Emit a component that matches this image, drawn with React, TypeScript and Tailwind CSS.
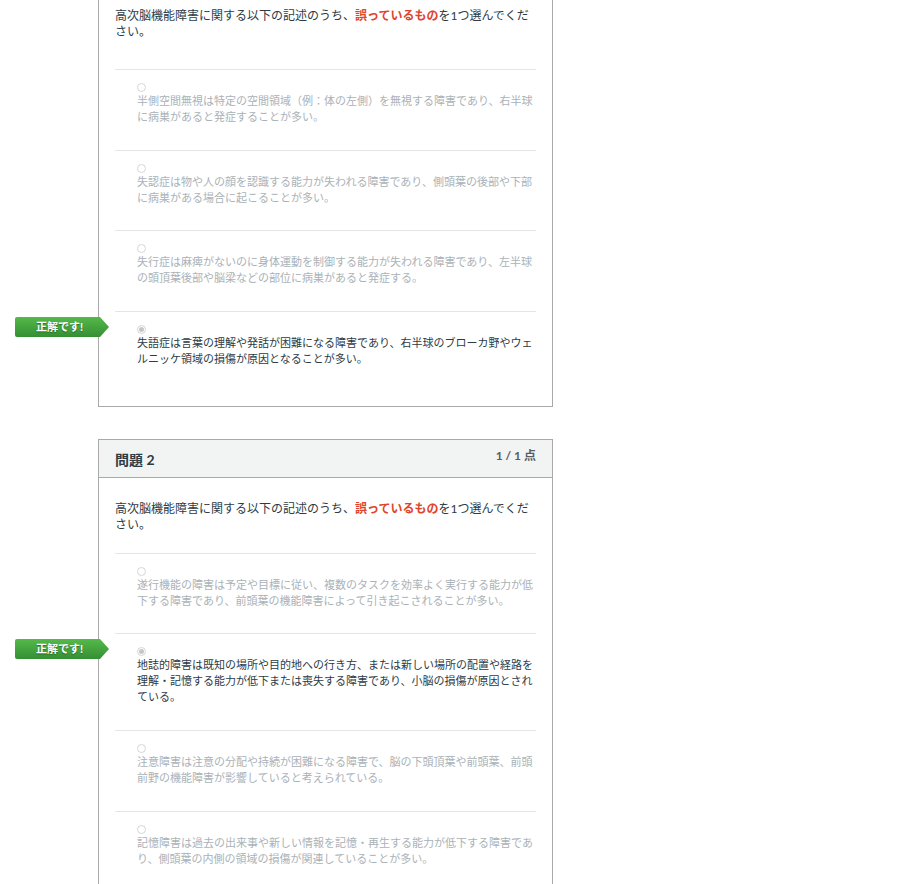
type Option = { text: string; selected?: boolean }

const q1Options: Option[] = [
  { text: '半側空間無視は特定の空間領域（例：体の左側）を無視する障害であり、右半球に病巣があると発症することが多い。' },
  { text: '失認症は物や人の顔を認識する能力が失われる障害であり、側頭葉の後部や下部に病巣がある場合に起こることが多い。' },
  { text: '失行症は麻痺がないのに身体運動を制御する能力が失われる障害であり、左半球の頭頂葉後部や脳梁などの部位に病巣があると発症する。' },
  { text: '失語症は言葉の理解や発話が困難になる障害であり、右半球のブローカ野やウェルニッケ領域の損傷が原因となることが多い。', selected: true },
]

const q2Options: Option[] = [
  { text: '遂行機能の障害は予定や目標に従い、複数のタスクを効率よく実行する能力が低下する障害であり、前頭葉の機能障害によって引き起こされることが多い。' },
  { text: '地誌的障害は既知の場所や目的地への行き方、または新しい場所の配置や経路を理解・記憶する能力が低下または喪失する障害であり、小脳の損傷が原因とされている。', selected: true },
  { text: '注意障害は注意の分配や持続が困難になる障害で、脳の下頭頂葉や前頭葉、前頭前野の機能障害が影響していると考えられている。' },
  { text: '記憶障害は過去の出来事や新しい情報を記憶・再生する能力が低下する障害であり、側頭葉の内側の領域の損傷が関連していることが多い。' },
]

const CorrectBanner = () => (
  <div className="absolute left-[-100px] top-[5px] flex h-[20px] w-[94px] items-center">
    <div className="flex h-full w-[85px] items-center justify-center rounded-l-[2px] bg-gradient-to-b from-[#55b94a] to-[#348f34] pl-[4px] text-[11px] font-bold text-white [text-shadow:0_1px_1px_rgba(0,0,0,0.35)]">
      正解です!
    </div>
    <svg width="9" height="20" viewBox="0 0 9 20" className="block">
      <defs>
        <linearGradient id="bn" x1="0" y1="0" x2="0" y2="1">
          <stop offset="0" stopColor="#55b94a" />
          <stop offset="1" stopColor="#348f34" />
        </linearGradient>
      </defs>
      <polygon points="0,0 9,10 0,20" fill="url(#bn)" />
    </svg>
  </div>
)

const Radio = ({ checked }: { checked?: boolean }) => (
  <span className="flex h-[9px] w-[9px] items-center justify-center rounded-full border border-[#d3d6d8] bg-white">
    {checked && <span className="h-[5px] w-[5px] rounded-full bg-[#c4c7c9]" />}
  </span>
)

const AnswerRow = ({ option }: { option: Option }) => (
  <div className="relative border-t border-[#e3e6e8] pb-[24.7px] pl-[22px] pt-[13px]">
    {option.selected && <CorrectBanner />}
    <div className="flex h-[10px] items-start">
      <Radio checked={option.selected} />
    </div>
    <p
      className={
        option.selected
          ? 'text-[11px] leading-[16px] text-[#2d3b45]'
          : 'text-[11px] leading-[16px] text-[#aab2b7]'
      }
    >
      {option.text}
    </p>
  </div>
)

const QuestionText = () => (
  <p className="text-[12px] leading-[16px] text-[#2d3b45]">
    高次脳機能障害に関する以下の記述のうち、
    <span className="font-bold text-[#e0452c]">誤っているもの</span>
    を1つ選んでください。
  </p>
)

export default function App() {
  return (
    <div
      className="min-h-screen bg-white pl-[98px]"
      style={{ fontFamily: 'Lato, "Noto Sans CJK JP", sans-serif' }}
    >
      {/* question 1 (scrolled, header off screen) */}
      <div className="w-[455px] border-x border-b border-[#a9a9a9] bg-white px-4 pb-[14px] pt-[8px]">
        <div className="mb-[29px]">
          <QuestionText />
        </div>
        {q1Options.map((o, i) => (
          <AnswerRow key={i} option={o} />
        ))}
      </div>

      {/* question 2 */}
      <div className="mt-[32px] w-[455px] border border-[#a9a9a9] bg-white">
        <div className="flex h-[38px] items-start justify-between border-b border-[#a9a9a9] bg-[#f2f3f3] px-4">
          <h2 className="pt-[11px] text-[14px] font-bold leading-[18px] text-[#2d3b45]">問題 2</h2>
          <span className="pt-[8px] text-[12px] font-bold leading-[16px] text-[#555e64]">1 / 1 点</span>
        </div>
        <div className="px-4 pb-[15px] pt-[23px]">
          <div className="mb-[20px]">
            <QuestionText />
          </div>
          {q2Options.map((o, i) => (
            <AnswerRow key={i} option={o} />
          ))}
        </div>
      </div>
    </div>
  )
}
